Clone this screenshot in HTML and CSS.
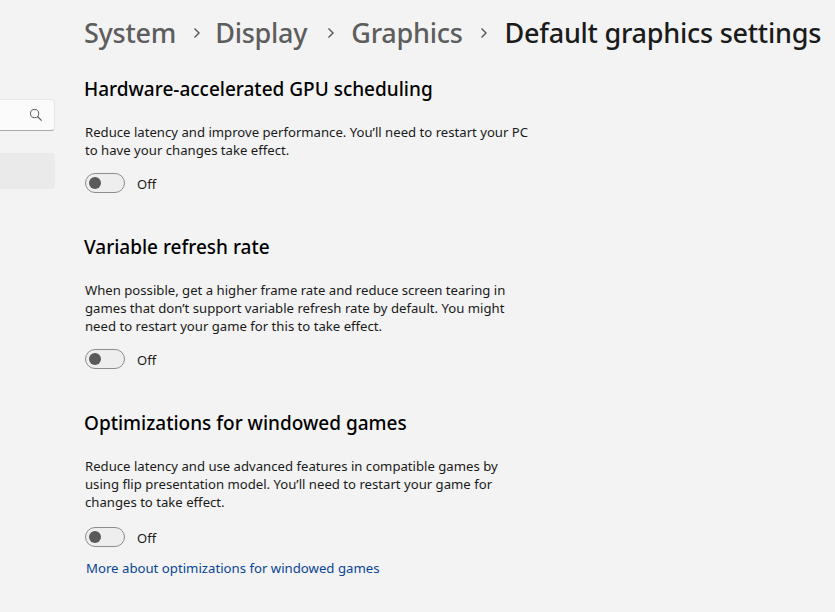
FILE: index.html
```html
<!DOCTYPE html>
<html lang="en">
<head>
<meta charset="utf-8">
<title>Default graphics settings</title>
<link rel="stylesheet" href="styles.css">
</head>
<body>
<div class="app">
  <aside class="sidebar">
    <div class="search">
      <svg class="search-icon" width="14" height="14" viewBox="0 0 14 14" aria-hidden="true"><circle cx="5.6" cy="5.6" r="4.1" fill="none" stroke="#555" stroke-width="1"/><path d="M8.5 8.5 L12.6 12.6" stroke="#555" stroke-width="1.1" fill="none"/></svg>
    </div>
    <div class="nav-item"></div>
  </aside>
  <main class="main">
    <nav class="crumbs">
      <span class="crumb">System</span>
      <svg class="sep" width="10" height="12" viewBox="0 0 10 12" aria-hidden="true"><path d="M2.5 1.5 L7 6 L2.5 10.5" fill="none" stroke="#555" stroke-width="1.4"/></svg>
      <span class="crumb">Display</span>
      <svg class="sep" width="10" height="12" viewBox="0 0 10 12" aria-hidden="true"><path d="M2.5 1.5 L7 6 L2.5 10.5" fill="none" stroke="#555" stroke-width="1.4"/></svg>
      <span class="crumb">Graphics</span>
      <svg class="sep" width="10" height="12" viewBox="0 0 10 12" aria-hidden="true"><path d="M2.5 1.5 L7 6 L2.5 10.5" fill="none" stroke="#555" stroke-width="1.4"/></svg>
      <span class="crumb current">Default graphics settings</span>
    </nav>
    <section class="group first">
      <h2>Hardware-accelerated GPU scheduling</h2>
      <p>Reduce latency and improve performance. You’ll need to restart your PC<br>to have your changes take effect.</p>
      <div class="toggle-row"><span class="toggle"><span class="knob"></span></span><span class="state">Off</span></div>
    </section>
    <section class="group">
      <h2>Variable refresh rate</h2>
      <p>When possible, get a higher frame rate and reduce screen tearing in<br>games that don’t support variable refresh rate by default. You might<br>need to restart your game for this to take effect.</p>
      <div class="toggle-row"><span class="toggle"><span class="knob"></span></span><span class="state">Off</span></div>
    </section>
    <section class="group last">
      <h2>Optimizations for windowed games</h2>
      <p>Reduce latency and use advanced features in compatible games by<br>using flip presentation model. You’ll need to restart your game for<br>changes to take effect.</p>
      <div class="toggle-row"><span class="toggle"><span class="knob"></span></span><span class="state">Off</span></div>
      <a class="more" href="#">More about optimizations for windowed games</a>
    </section>
  </main>
</div>
</body>
</html>
```
FILE: styles.css
```css
html, body { margin: 0; padding: 0; height: 100%; overflow: hidden; }
body { background: #f3f3f3; color: #1a1a1a; font-family: "Noto Sans", "Open Sans", sans-serif; }
.app { display: flex; height: 612px; }
.sidebar { width: 55px; flex: none; padding-top: 99px; box-sizing: border-box; overflow: hidden; }
.search { height: 32px; box-sizing: border-box; margin-left: -20px; background: #fbfbfb; border: 1px solid #e6e6e6; border-bottom-color: #a8a8a8; border-radius: 4px; display: flex; align-items: center; justify-content: flex-end; padding-right: 11px; }
.search-icon { display: block; }
.nav-item { height: 36px; margin-top: 22px; margin-left: -20px; background: #eaeaea; border-radius: 4px; }
.main { padding-left: 29px; flex: 1; min-width: 0; }
.crumbs { display: flex; align-items: center; height: 28px; margin-top: 18px; white-space: nowrap; font-size: 27px; font-weight: 500; letter-spacing: -0.25px; color: #5d5d5d; }
.crumb.current { color: #1b1b1b; }
.sep { margin: 1px 15px 0 16px; flex: none; }
.sep:nth-of-type(1) { margin-right: 13px; }
.sep:nth-of-type(2) { margin-left: 19px; }
.sep:nth-of-type(3) { margin-right: 16px; }
.group { margin-top: 41px; }
.group.first { margin-top: 30px; }
h2 { margin: 0; font-size: 19px; line-height: 26px; font-weight: 500; color: #000; }
p { margin: 21px 0 0 1px; font-size: 13.15px; line-height: 18px; color: #1a1a1a; }
.toggle-row { display: flex; align-items: center; margin: 14px 0 0 1px; height: 20px; }
.last .toggle-row { margin-top: 16px; }
.toggle { height: 18px; border: 1px solid #8c8c8c; border-radius: 10px; background: #eeeeee; display: flex; align-items: center; padding-left: 3px; box-sizing: content-box; width: 35px; }
.knob { width: 12px; height: 12px; border-radius: 50%; background: #5a5a5a; }
.state { margin-left: 12px; padding-top: 2px; font-size: 13px; color: #1a1a1a; }
.more { display: block; margin: 12px 0 0 2px; font-size: 13.2px; line-height: 18px; color: #0a4593; text-decoration: none; }
```
